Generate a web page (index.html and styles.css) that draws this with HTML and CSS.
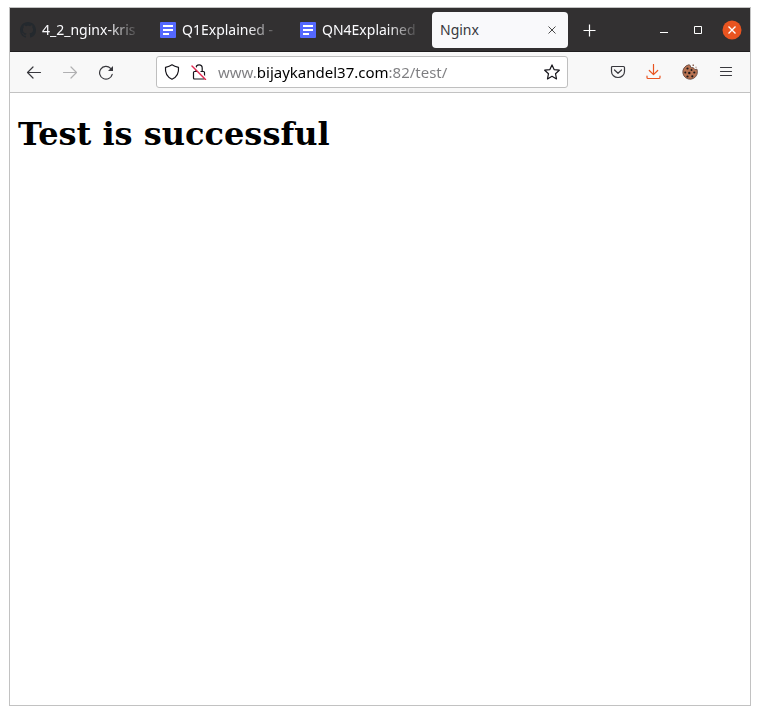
FILE: index.html
```html
<!DOCTYPE html>
<html lang="en">
<head>
<meta charset="utf-8">
<title>Nginx</title>
<link rel="stylesheet" href="styles.css">
</head>
<body>
<div class="window">
  <header class="titlebar">
    <div class="tabs">
      <button class="tab" type="button">
        <svg class="favicon" width="16" height="16" viewBox="0 0 16 16" fill="#24292e"><path d="M8 0C3.58 0 0 3.58 0 8c0 3.54 2.29 6.53 5.47 7.59.4.07.55-.17.55-.38 0-.19-.01-.82-.01-1.49-2.01.37-2.53-.49-2.69-.94-.09-.23-.48-.94-.82-1.13-.28-.15-.68-.52-.01-.53.63-.01 1.08.58 1.23.82.72 1.21 1.87.87 2.33.66.07-.52.28-.87.51-1.07-1.78-.2-3.64-.89-3.64-3.95 0-.87.31-1.59.82-2.15-.08-.2-.36-1.02.08-2.12 0 0 .67-.21 2.2.82.64-.18 1.32-.27 2-.27s1.36.09 2 .27c1.53-1.04 2.2-.82 2.2-.82.44 1.1.16 1.92.08 2.12.51.56.82 1.27.82 2.15 0 3.07-1.87 3.75-3.65 3.95.29.25.54.73.54 1.48 0 1.07-.01 1.93-.01 2.2 0 .21.15.46.55.38A8.01 8.01 0 0 0 16 8c0-4.42-3.58-8-8-8z"/></svg>
        <span class="tab-label">4_2_nginx-kris</span>
      </button>
      <button class="tab" type="button">
        <svg class="favicon" width="16" height="16" viewBox="0 0 16 16"><rect width="16" height="16" rx="1" fill="#5468ff"/><path d="M3 4h10M3 8h10M3 12h6" stroke="#fff" stroke-width="2"/></svg>
        <span class="tab-label">Q1Explained -</span>
      </button>
      <button class="tab" type="button">
        <svg class="favicon" width="16" height="16" viewBox="0 0 16 16"><rect width="16" height="16" rx="1" fill="#5468ff"/><path d="M3 4h10M3 8h10M3 12h6" stroke="#fff" stroke-width="2"/></svg>
        <span class="tab-label">QN4Explained</span>
      </button>
      <div class="tab tab-active">
        <span class="tab-label">Nginx</span>
        <button class="tab-close" type="button" aria-label="Close tab">
          <svg width="16" height="16" viewBox="0 0 16 16" fill="none" stroke="#4a4a4a"><path d="M4.500 4.500l7 7M11.500 4.500l-7 7"/></svg>
        </button>
      </div>
      <button class="new-tab" type="button" aria-label="New tab">
        <svg width="16" height="16" viewBox="0 0 16 16" fill="none" stroke="#fff" stroke-width="1.2"><path d="M8.500 2.500v12M2.500 8.500h12"/></svg>
      </button>
    </div>
    <div class="controls">
      <button class="control" type="button" aria-label="Minimize"><svg width="16" height="16" viewBox="0 0 16 16" fill="none" stroke="#fff"><path d="M4 10.500h8"/></svg></button>
      <button class="control" type="button" aria-label="Maximize"><svg width="16" height="16" viewBox="0 0 16 16" fill="none" stroke="#fff"><path d="M4.500 4.500h7v7h-7z"/></svg></button>
      <button class="control" type="button" aria-label="Close"><svg width="20" height="20" viewBox="0 0 20 20"><circle cx="10" cy="10" r="9.500" fill="#e95420"/><path d="M6.500 6.500l7 7M13.500 6.500l-7 7" stroke="#fff" stroke-width="1.400"/></svg></button>
    </div>
  </header>

  <nav class="toolbar" aria-label="Navigation">
    <button class="tool" type="button" aria-label="Back"><svg viewBox="0 0 16 16"><path d="M14.500 8.500h-13M7 3L1.500 8.500 7 14"/></svg></button>
    <button class="tool tool-dim" type="button" aria-label="Forward"><svg viewBox="0 0 16 16"><path d="M1.500 8.500h13M9 3l5.500 5.500L9 14"/></svg></button>
    <button class="tool" type="button" aria-label="Reload"><svg viewBox="0 0 16 16"><path d="M14.200 10.300A6.400 6.400 0 1 1 12.600 4.300"/><path d="M15 2v5h-5z" fill="#38383d" stroke="none"/></svg></button>

    <div class="address">
      <svg viewBox="0 0 16 16"><path d="M8 .8C6.200 2 4 2.800 1.500 3.400 1 8.500 2.500 12.800 8 15.300c5.500-2.500 7-6.800 6.500-11.900C12 2.800 9.800 2 8 .8z"/></svg>
      <svg class="lock" viewBox="0 0 16 16"><path d="M5 7V4a3 3 0 0 1 6.200 0v3M3.500 7.500h9a1 1 0 0 1 1 1V14a1 1 0 0 1-1 1h-9a1 1 0 0 1-1-1V8.500a1 1 0 0 1 1-1z"/><path d="M2 1.500l13.500 13.500" stroke="#fff" stroke-width="2"/><path d="M1 2l13.500 13.500" stroke="#e22850" stroke-width="1.400"/></svg>
      <input class="url" type="text" aria-label="Address" value="www.bijaykandel37.com:82/test/" spellcheck="false">
      <button class="bookmark" type="button" aria-label="Bookmark this page"><svg viewBox="0 0 16 16"><path d="M8 .9l2.100 4.700 5.200.6-3.800 3.500 1 5.200L8 12.300l-4.500 2.600 1-5.200L.7 6.200l5.200-.6z"/></svg></button>
    </div>

    <button class="tool" type="button" aria-label="Save to Pocket"><svg viewBox="0 0 16 16"><path d="M2.500 2.500h11a1 1 0 0 1 1 1V7.500a6.500 6 0 0 1-13 0V3.500a1 1 0 0 1 1-1zM4.500 6L8 9.300 11.500 6"/></svg></button>
    <button class="tool tool-accent" type="button" aria-label="Downloads"><svg viewBox="0 0 16 16"><path d="M7.500.500v10M3.300 6.500l4.200 4.200 4.200-4.200M1 12v1.500a1 1 0 0 0 1 1h11a1 1 0 0 0 1-1V12"/></svg></button>
    <button class="tool" type="button" aria-label="Cookies"><svg viewBox="0 0 16 16"><path d="M6.500.8A7.300 7.300 0 1 0 15.400 7.500L15 5.200 12.800 5.600 11.200 3.600 9 3.800 8.200 1.600z" fill="#b87352" stroke="#5b4038" stroke-width=".8"/><path d="M10.500.600h1.500v1.300h-1.500zM13.500 2.800h1v1h-1z" fill="#8a6253" stroke="none"/><g fill="#1d1a1b" stroke="none"><circle cx="5.500" cy="4.500" r="1.100"/><circle cx="9.500" cy="6" r="1"/><circle cx="3.300" cy="8.500" r="1"/><circle cx="7.300" cy="9" r="1.200"/><circle cx="12.300" cy="8.500" r="1.100"/><circle cx="5.500" cy="12.500" r="1.100"/><circle cx="10.300" cy="12.300" r="1.100"/></g></svg></button>
    <button class="tool" type="button" aria-label="Menu"><svg viewBox="0 0 16 16"><path d="M2.500 3.500h11M2.500 7.500h11M2.500 11.500h11"/></svg></button>
  </nav>

  <main class="page">
    <h1>Test is successful</h1>
  </main>
</div>
</body>
</html>
```

FILE: styles.css
```css
* {
  box-sizing: border-box;
}

body {
  margin: 0;
  padding: 7px 9px 9px;
  min-height: 100vh;
  display: flex;
  background: #fff;
  font-family: "Noto Sans", "Open Sans", sans-serif;
  font-size: 14px;
}

button {
  margin: 0;
  padding: 0;
  border: 0;
  background: none;
  color: inherit;
  font: inherit;
}

svg {
  display: block;
  flex: none;
}

.window {
  flex: 1;
  min-width: 0;
  display: flex;
  flex-direction: column;
  border: 1px solid #c2c2c2;
}

.titlebar {
  display: flex;
  justify-content: space-between;
  height: 44px;
  background: #323031;
  border-bottom: 1px solid #1f1d1e;
  color: #fbfbfe;
}

.tabs {
  flex: 1;
  min-width: 0;
  display: flex;
  align-items: center;
}

.tab {
  flex: 0 1 136px;
  min-width: 0;
  height: 36px;
  margin: 0 2px;
  padding: 0 8px;
  display: flex;
  align-items: center;
  gap: 6px;
  border-radius: 4px;
  text-align: left;
}

.tab-label {
  flex: 1;
  min-width: 0;
  overflow: hidden;
  white-space: nowrap;
  line-height: 22px;
}

button.tab .tab-label {
  mask-image: linear-gradient(to left, transparent, #000 32px);
}

.tab-active {
  background: #f9f9fb;
  color: #38383d;
}

.new-tab {
  width: 38px;
  height: 36px;
  display: grid;
  place-items: center;
}

.controls {
  display: flex;
  align-items: center;
  padding-right: 1px;
}

.control {
  width: 34px;
  height: 36px;
  display: grid;
  place-items: center;
}

.toolbar {
  display: flex;
  align-items: center;
  height: 41px;
  padding: 0 6px;
  background: #f8f8f8;
  border-bottom: 1px solid #c2c2c2;
}

.toolbar svg {
  width: 16px;
  height: 16px;
  fill: none;
  stroke: #38383d;
  stroke-width: 1.2;
  stroke-linecap: round;
  stroke-linejoin: round;
}

.tool {
  width: 36px;
  height: 32px;
  display: grid;
  place-items: center;
}

.toolbar .tool-dim svg {
  stroke: #b0b0b2;
}

.toolbar .tool-accent svg {
  stroke: #e95420;
}

.address {
  flex: 1;
  min-width: 0;
  height: 32px;
  margin: 0 32px;
  padding: 0 7px;
  display: flex;
  align-items: center;
  gap: 11px;
  background: #fff;
  border: 1px solid #bfbfbf;
  border-radius: 3px;
}

.address svg {
  stroke: #15141a;
}

/* The host name is drawn darker than the rest of the address. */
.url {
  flex: 1;
  min-width: 0;
  height: 24px;
  padding: 0;
  border: 0;
  outline: 0;
  font: inherit;
  font-size: 15px;
  color: transparent;
  background: linear-gradient(to right, #7d7d80 39px, #000 39px 170px, #7d7d80 170px);
  background-clip: text;
  -webkit-background-clip: text;
}

.page {
  flex: 1;
  padding: 0 8px;
}

.page h1 {
  margin: 21px 0;
  font-family: "DejaVu Serif", serif;
  font-size: 32px;
  line-height: 40px;
  color: #000;
}
```
